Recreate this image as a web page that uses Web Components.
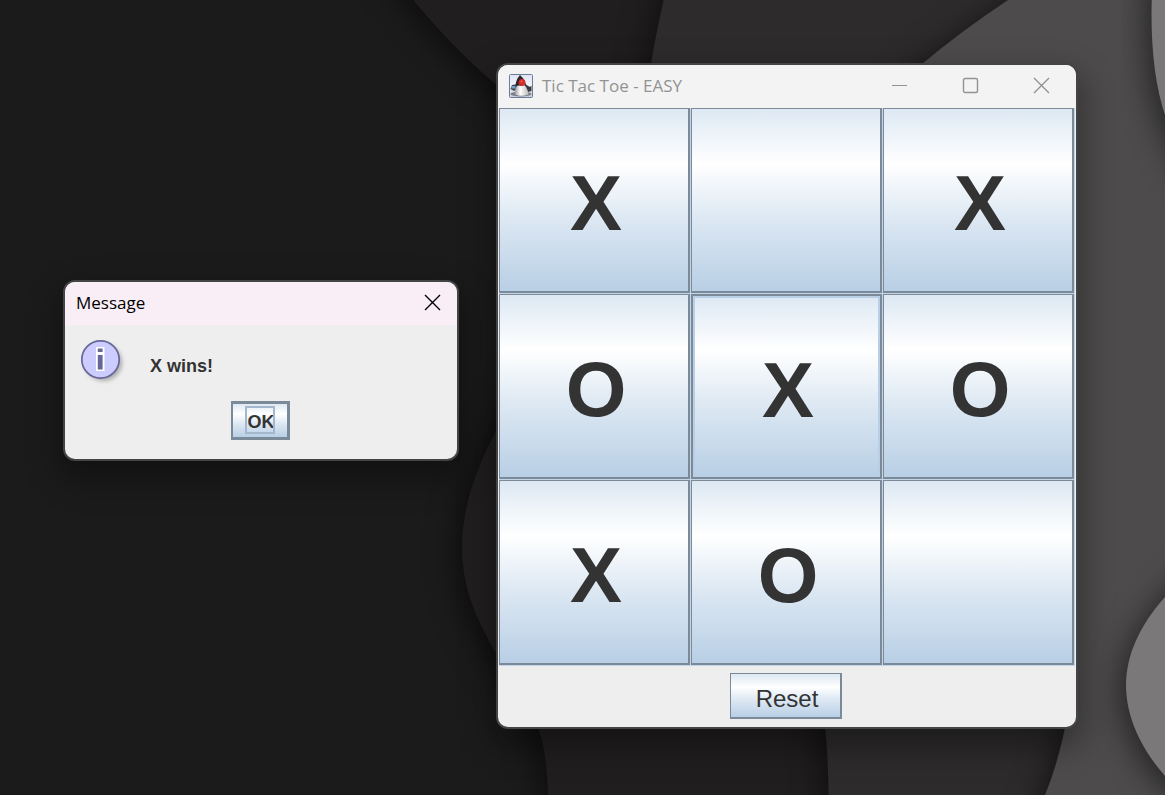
<!DOCTYPE html>
<html lang="en">
<head>
<meta charset="utf-8">
<title>Tic Tac Toe</title>
<style>
  html, body { margin: 0; height: 100%; overflow: hidden; background: #1b1b1b; }
  body { font-family: "Liberation Sans", Arial, sans-serif; color: #333; }
</style>
</head>
<body>
<desk-top>
  <desk-wallpaper slot="wallpaper"></desk-wallpaper>
  <app-window class="game" controls="min max close" inactive>
    <duke-icon slot="icon"></duke-icon>
    <span slot="title">Tic Tac Toe - EASY</span>
    <game-board moves="X,,X,O,X,O,X,O," focused="4"></game-board>
  </app-window>
  <app-window class="message" controls="close">
    <span slot="title">Message</span>
    <message-pane>X wins!</message-pane>
  </app-window>
</desk-top>

<script>
const metal = `
  button {
    font: inherit; color: #333; margin: 0; border-style: solid; border-color: #7a8a99;
    border-width: 1px 2px 2px 1px; border-radius: 0;
    background: linear-gradient(#dde8f3 0%, #fff 30%, #dde8f3 60%, #b8cfe5 100%);
  }`;

function define(name, html, setup) {
  const template = document.createElement('template');
  template.innerHTML = html;
  customElements.define(name, class extends HTMLElement {
    connectedCallback() {
      if (this.shadowRoot) return;
      this.attachShadow({ mode: 'open' }).append(template.content.cloneNode(true));
      if (setup) setup(this, this.shadowRoot);
    }
  });
}

define('desk-top', `
  <style>
    :host { display: block; position: relative; width: 100%; height: 100%; overflow: hidden; }
    ::slotted(desk-wallpaper) { position: absolute; inset: 0; }
    ::slotted(.game) { position: absolute; left: 498px; top: 65px; }
    ::slotted(.message) { position: absolute; left: 65px; top: 282px; min-width: 392px; --bar: #f9eef5; --close: 50px; --bar-pad: 11px; }
  </style>
  <slot name="wallpaper"></slot>
  <slot></slot>`);

define('desk-wallpaper', `
  <style>
    :host { display: block; }
    svg { display: block; width: 100%; height: 100%; }
  </style>
  <svg viewBox="0 0 1165 795" preserveAspectRatio="xMidYMid slice" aria-hidden="true">
    <defs>
      <filter id="shade" x="-30%" y="-30%" width="160%" height="160%" color-interpolation-filters="sRGB">
        <feDropShadow dx="-6" dy="6" stdDeviation="15" flood-color="#000" flood-opacity="0.5"/>
      </filter>
    </defs>
    <rect width="1165" height="795" fill="#1b1b1b"/>
    <path filter="url(#shade)" fill="#211e1f" d="M390 -30 Q440 38 500 88 Q600 200 560 320 C530 375 510 400 497 429 C475 470 462 510 462 547 C462 590 478 622 497 655 C515 685 530 706 538 728 Q547 752 548 795 L548 840 H1250 V-30Z"/>
    <path filter="url(#shade)" fill="#2d2b2c" d="M673 -40 Q656 30 650 70 C640 300 820 500 825 728 Q829 760 829 840 H1250 V-40Z"/>
    <path filter="url(#shade)" fill="#4d4b4c" d="M1050 -32 L1008 0 Q960 32 922 64 C800 180 1130 480 1065 728 Q1057 766 1045 795 L1025 840 H1250 V-40Z"/>
    <path filter="url(#shade)" fill="#7a7879" d="M1153 -30 Q1147 62 1165 115 L1190 170 H1250 V-30Z"/>
    <path filter="url(#shade)" fill="#7a7879" d="M1165 597 C1140 625 1126 655 1126 685 C1126 718 1142 750 1165 776 L1200 805 H1260 V560 H1200Z"/>
  </svg>`);

define('app-window', `
  <style>
    :host {
      display: flex; flex-direction: column; border-radius: 10px; background: #eee;
      box-shadow: 0 0 0 2px #454445, 0 14px 32px 6px rgba(0,0,0,.35);
    }
    header {
      display: flex; align-items: center; height: 43px; box-sizing: border-box;
      padding: 0 0 2px var(--bar-pad, 11px); gap: 9px;
      background: var(--bar, #f3f3f3); border-radius: 10px 10px 0 0;
      font: 17px/24px "Open Sans", "Noto Sans", sans-serif; color: #000;
    }
    :host([inactive]) header { color: #929292; }
    .title { flex: 1; white-space: nowrap; }
    button {
      width: 70px; height: 41px; padding: 0; border: 0; background: none; color: inherit;
      display: flex; align-items: center; justify-content: center;
    }
    button.max { width: 72px; }
    button.close { width: var(--close, 70px); }
    nav { display: flex; }
    svg { display: block; width: 17px; height: 17px; fill: none; stroke: currentColor; stroke-width: 1.4; }
  </style>
  <header>
    <slot name="icon"></slot>
    <div class="title"><slot name="title"></slot></div>
    <nav></nav>
  </header>
  <slot></slot>`, (host, root) => {
  const shapes = {
    min: ['Minimize', '<path d="M1 8.500H16" stroke-width="1"/>'],
    max: ['Maximize', '<rect x="1.500" y="1.500" width="14" height="14" rx="1.500"/>'],
    close: ['Close', '<path d="M1 1L16 16M16 1L1 16"/>']
  };
  root.querySelector('nav').innerHTML = host.getAttribute('controls').split(' ').map(key =>
    `<button type="button" class="${key}" aria-label="${shapes[key][0]}"><svg viewBox="0 0 17 17" aria-hidden="true">${shapes[key][1]}</svg></button>`).join('');
});

define('duke-icon', `
  <style>:host { display: block; } svg { display: block; width: 24px; height: 24px; }</style>
  <svg viewBox="0 0 24 24" aria-hidden="true">
    <defs>
      <linearGradient id="sky" x2="0" y2="1"><stop offset="0" stop-color="#dfe5f1"/><stop offset=".5" stop-color="#f0f3fa"/><stop offset="1" stop-color="#c9cdd9"/></linearGradient>
      <linearGradient id="belly"><stop offset="0" stop-color="#999"/><stop offset=".4" stop-color="#fff"/><stop offset="1" stop-color="#bbb"/></linearGradient>
    </defs>
    <rect x=".5" y=".5" width="23" height="23" rx="1" fill="url(#sky)" stroke="#6c7d9c"/>
    <ellipse cx="12" cy="20" rx="10.500" ry="2.500" fill="#7b7e88"/>
    <path d="M9 10L3 11L1.500 15L5 17L8 15Z" fill="#45484e"/>
    <path d="M2.500 12h4v2.500h-4z" fill="#6ba3d0"/>
    <path d="M16 10L21 13L22.500 11.500V17L19 18L15 14Z" fill="#393b41"/>
    <path d="M8.500 11Q5 16 6 20.500Q12 23 19.500 20.500Q19 15 15.500 11Z" fill="url(#belly)"/>
    <path d="M11 1Q6.500 6 6.500 12.500Q10 11 12 12Q14 10 17 12Q16.500 6 11 1Z" fill="#29272c"/>
    <circle cx="13" cy="8.500" r="3.400" fill="#d92a2a"/>
    <circle cx="12.500" cy="7.600" r="1" fill="#f0605a"/>
  </svg>`);

define('game-board', `
  <style>
    ${metal}
    :host { display: block; padding: 0 1px; }
    .grid { display: grid; grid-template-columns: repeat(3, 192px); grid-auto-rows: 186px; }
    .cell { display: flex; padding: 0 1px 1px 0; background: #c3d5e7; }
    .cell button { flex: 1; padding: 6px 0 0 4px; font-size: 78px; font-weight: bold; line-height: 84px; }
    .cell button.focused { border-width: 2px; padding-left: 3px; box-shadow: inset 0 0 0 2px #b8cfe5; }
    footer { display: flex; justify-content: center; padding: 7px 2px 8px 0; }
    footer button { width: 112px; height: 46px; padding: 7px 0 0 3px; font-size: 24px; line-height: 28px; }
  </style>
  <div class="grid"></div>
  <footer><button type="button">Reset</button></footer>`, (host, root) => {
  const focused = Number(host.getAttribute('focused'));
  root.querySelector('.grid').innerHTML = host.getAttribute('moves').split(',').map((mark, i) =>
    `<div class="cell"><button type="button" aria-label="Square ${i + 1} ${mark}"${i === focused ? ' class="focused"' : ''}>${mark}</button></div>`).join('');
});

define('message-pane', `
  <style>
    ${metal}
    :host { display: flex; flex-direction: column; padding: 13px 14px 19px; }
    .row { display: flex; gap: 23px; font-size: 18px; font-weight: bold; line-height: 20px; }
    .row p { margin: 18px 0 0; }
    svg { display: block; width: 48px; height: 48px; }
    button {
      align-self: center; display: flex; justify-content: center; align-items: center;
      width: 59px; height: 39px; margin: 15px 1px 0 0; padding: 0 1px 1px 0;
      border-width: 3px 3px 3px 2px; font-size: 18px; font-weight: bold; line-height: 28px;
    }
    button span { box-sizing: border-box; width: 30px; height: 28px; padding-left: 1px; border: 2px solid #a3b8cc; overflow: hidden; text-align: left; }
  </style>
  <div class="row">
    <svg viewBox="0 0 48 48" aria-hidden="true">
      <defs><filter id="soft" x="-30%" y="-30%" width="160%" height="160%"><feGaussianBlur stdDeviation="2"/></filter></defs>
      <circle cx="24.500" cy="24.500" r="18.500" fill="#aaa" filter="url(#soft)"/>
      <circle cx="21.500" cy="21.500" r="18.700" fill="#ccf" stroke="#669" stroke-width="1.700"/>
      <path d="M17 9h8.500v24h-8.500z" fill="#fff"/>
      <path d="M18.800 10.500h4.800v3.500h-4.800zM18.800 17h4.800v14.500h-4.800z" fill="#669"/>
    </svg>
    <p><slot></slot></p>
  </div>
  <button type="button"><span>OK</span></button>`);
</script>
</body>
</html>
